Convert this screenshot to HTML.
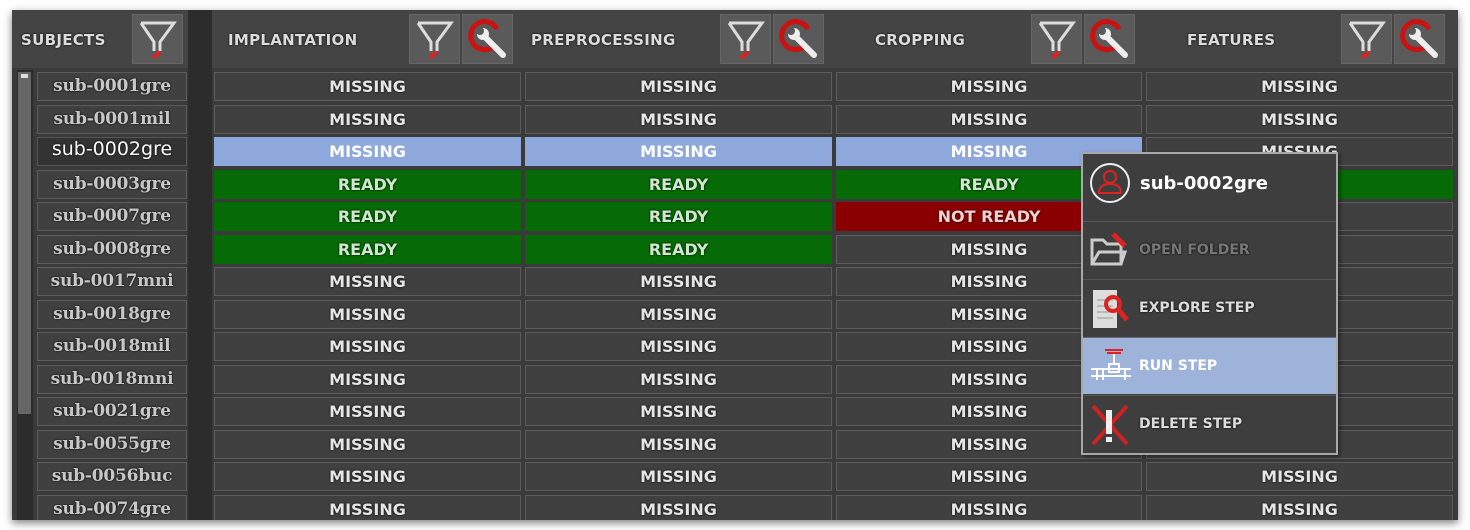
<!DOCTYPE html>
<html><head><meta charset="utf-8"><style>
*{margin:0;padding:0;box-sizing:border-box}
body{width:1470px;height:530px;background:#fff;position:relative;overflow:hidden;font-family:"DejaVu Sans",sans-serif}
#panel{position:absolute;left:12px;top:10px;width:1446px;height:510px;background:#3a3a3a;box-shadow:0 3px 8px rgba(0,0,0,.5);overflow:hidden}
.hdr{position:absolute;top:0;height:58px;background:#444}
.htxt{position:absolute;top:21px;color:#ddd;font:bold 15px "DejaVu Sans",sans-serif;letter-spacing:.3px;text-shadow:0 0 2px #000}
.btn{position:absolute;top:4px;width:51px;height:50px;background:#5a5a5a;border:1px solid #666}
.gap{position:absolute;left:176px;top:0;width:24px;height:510px;background:#2c2c2c}
.row{position:absolute;left:0;height:29px;width:1446px}
.c{position:absolute;top:0;height:29px;background:#404040;border:1px solid #5c5c5c;color:#e6e6e6;font:bold 16px "DejaVu Sans",sans-serif;text-align:center;line-height:27px;text-shadow:0 0 2px #000}
.s{left:25px;width:150px;font:bold 17px "DejaVu Serif",serif;color:#c8c8c8;line-height:27px;letter-spacing:-.2px}
.a{left:202px;width:307px}.b{left:513px;width:307px}.d{left:824px;width:306px}.e{left:1134px;width:307px}
.sel{background:#8ea8dc;border-color:#8ea8dc;color:#fff}
.g{background:#066a06;border-color:#066a06;color:#cfe8cf}
.r{background:#8a0000;border-color:#8a0000;color:#f0d0d0}
.ssel{background:#333;color:#fff;font:19px "DejaVu Sans",sans-serif;border-color:#555;letter-spacing:0}
#menu{position:absolute;left:1081px;top:152px;width:257px;height:303px;background:#3e3e3e;border:2px solid #a8a8a8;box-shadow:2px 2px 4px rgba(0,0,0,.4)}
.mi{position:absolute;left:0;width:253px;height:57px;color:#ddd;font:bold 14px "DejaVu Sans",sans-serif;line-height:57px;padding-left:56px;border-top:1px solid #555;text-shadow:0 0 2px #000}
.mi svg{position:absolute;left:6px;top:8px}
</style></head><body>
<div id="panel">
<div class="hdr" style="left:0;width:176px"></div>
<div class="htxt" style="left:9px">SUBJECTS</div>
<div class="btn" style="left:120px"><svg width="49" height="48"><path d="M8 8H41L27 27V36" fill="none" stroke="#ddd" stroke-width="3"/><path d="M8 8L21 27V36" fill="none" stroke="#ddd" stroke-width="3"/><path d="M27 37L20 43" stroke="#d22" stroke-width="4"/></svg></div>
<div class="gap"></div>
<div class="hdr" style="left:200px;width:1246px"></div>
<div class="htxt" style="left:216px">IMPLANTATION</div>
<div class="htxt" style="left:519px">PREPROCESSING</div>
<div class="htxt" style="left:863px">CROPPING</div>
<div class="htxt" style="left:1175px">FEATURES</div>
<div id="btns"></div>
<div style="position:absolute;left:5px;top:60px;width:16px;height:450px;background:#2c2c2c"></div>
<div style="position:absolute;left:6px;top:62px;width:13px;height:342px;background:#666"></div>
<div style="position:absolute;left:9px;top:64px;width:7px;height:4px;background:#ddd"></div>
<div id="rows"></div>
</div>
<div id="menu">
<div style="position:absolute;left:6px;top:8px"><svg width="42" height="42"><circle cx="21" cy="21" r="19" fill="none" stroke="#eee" stroke-width="2"/><circle cx="21" cy="15" r="6" fill="none" stroke="#d22" stroke-width="2"/><path d="M10 31Q10 22 21 22Q32 22 32 31Z" fill="none" stroke="#d22" stroke-width="2"/></svg></div>
<div style="position:absolute;left:57px;top:19px;color:#fff;font:bold 18px 'DejaVu Sans',sans-serif">sub-0002gre</div>
<div class="mi" style="top:67px;color:#777"><svg width="44" height="42"><path d="M3 10H14L18 14H32V34H3Z" fill="none" stroke="#ccc" stroke-width="3"/><path d="M3 34L10 22H36L32 34" fill="none" stroke="#ccc" stroke-width="3"/><path d="M24 4L36 16" stroke="#d22" stroke-width="5"/></svg>OPEN FOLDER</div>
<div class="mi" style="top:125px"><svg width="44" height="42"><rect x="4" y="2" width="24" height="38" fill="#ddd"/><path d="M8 12H24M8 18H24M8 24H24M8 30H24" stroke="#999"/><circle cx="24" cy="16" r="7" fill="none" stroke="#d22" stroke-width="4"/><path d="M29 21L38 32" stroke="#d22" stroke-width="5"/></svg>EXPLORE STEP</div>
<div class="mi" style="top:183px;background:#9db3d9;color:#fff;border-top:1px solid #667;text-shadow:none"><svg width="44" height="42"><path d="M16 4H34M18 7H32" stroke="#d22" stroke-width="2"/><path d="M25 8V18" stroke="#fff" stroke-width="2"/><rect x="20" y="18" width="10" height="8" fill="none" stroke="#fff" stroke-width="2"/><path d="M2 23H42M2 30H42M8 23V34M14 23V34M36 23V34" stroke="#fff" stroke-width="2"/></svg>RUN STEP</div>
<div class="mi" style="top:241px"><svg width="44" height="42"><path d="M4 2L38 40M38 2L4 40" stroke="#c22" stroke-width="4"/><rect x="17" y="6" width="6" height="24" fill="#eee"/><rect x="17" y="33" width="6" height="5" fill="#eee"/></svg>DELETE STEP</div>
</div>
<script>
var fil='<svg width="49" height="48"><path d="M8 8H41L27 27V36" fill="none" stroke="#ddd" stroke-width="3"/><path d="M8 8L21 27V36" fill="none" stroke="#ddd" stroke-width="3"/><path d="M27 37L20 43" stroke="#d22" stroke-width="4"/></svg>';
var srch='<svg width="49" height="48"><path d="M31 31A14 14 0 1 1 34 14" fill="none" stroke="#c11" stroke-width="5"/><path d="M22 22L40 40" stroke="#eee" stroke-width="6" stroke-linecap="round"/><circle cx="20" cy="19" r="6" fill="#eee"/><circle cx="17" cy="16" r="4" fill="#5a5a5a"/></svg>';
var h='';[397,708,1019,1329].forEach(function(x){h+='<div class="btn" style="left:'+x+'px">'+fil+'</div><div class="btn" style="left:'+(x+53)+'px">'+srch+'</div>';});
document.getElementById('btns').innerHTML=h;
var subs=['sub-0001gre','sub-0001mil','sub-0002gre','sub-0003gre','sub-0007gre','sub-0008gre','sub-0017mni','sub-0018gre','sub-0018mil','sub-0018mni','sub-0021gre','sub-0055gre','sub-0056buc','sub-0074gre'];
var st={2:[['sel','MISSING'],['sel','MISSING'],['sel','MISSING'],['','MISSING']],3:[['g','READY'],['g','READY'],['g','READY'],['g','READY']],4:[['g','READY'],['g','READY'],['r','NOT READY'],['','MISSING']],5:[['g','READY'],['g','READY'],['','MISSING'],['','MISSING']]};
var r='';var cols=['a','b','d','e'];
subs.forEach(function(s,i){var t=62+i*32.5;r+='<div class="row" style="top:'+t+'px"><div class="c s'+(i==2?' ssel':'')+'">'+s+'</div>';
for(var j=0;j<4;j++){var v=st[i]?st[i][j]:['','MISSING'];r+='<div class="c '+cols[j]+' '+v[0]+(i==2&&j<3?'" style="text-shadow:none':'')+'">'+v[1]+'</div>';}r+='</div>';});
document.getElementById('rows').innerHTML=r;
</script>
</body></html>
